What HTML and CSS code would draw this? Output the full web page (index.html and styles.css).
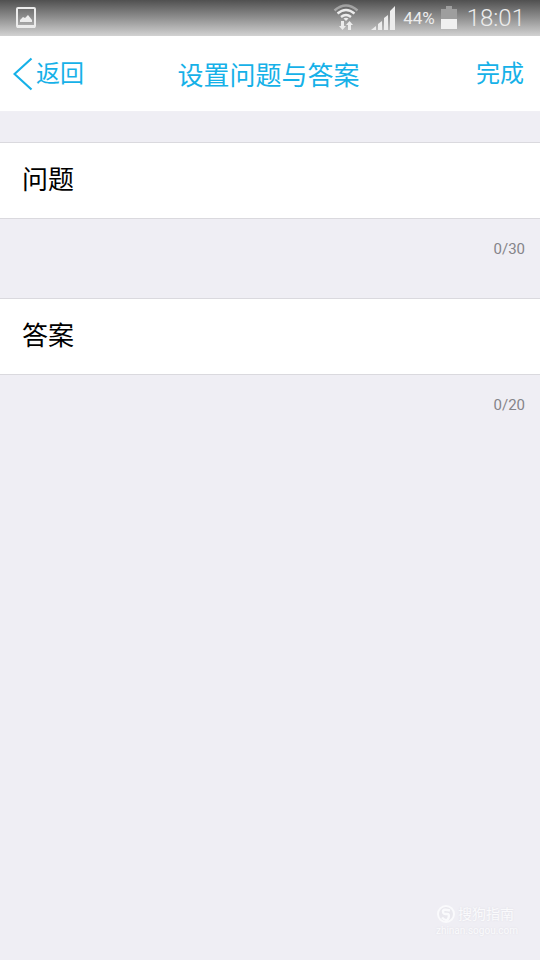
FILE: index.html
```html
<!DOCTYPE html>
<html lang="zh-CN">
<head>
<meta charset="utf-8">
<meta name="viewport" content="width=device-width, initial-scale=1">
<title>设置问题与答案</title>
<link rel="stylesheet" href="styles.css">
</head>
<body>
<div class="status-bar">
  <svg class="status-photo" width="20" height="22" viewBox="0 0 20 22" aria-hidden="true">
    <rect x="1" y="1" width="18" height="19" rx="1" fill="none" stroke="currentColor" stroke-width="2"/>
    <path d="M1 18h18v3H1z" fill="currentColor"/>
    <path d="M4 15v-2l3-3 2 1 3-3 4 5v2z" fill="currentColor"/>
  </svg>
  <div class="status-info">
    <svg width="26" height="28" viewBox="0 0 26 28" aria-hidden="true">
      <g fill="none" stroke="currentColor" stroke-width="2.4">
        <path d="M1.500 6.500Q13-3.500 24.500 6.500" opacity=".45"/>
        <path d="M4.500 9.500Q13 2.500 21.500 9.500"/>
        <path d="M8 13Q13 9 18 13"/>
      </g>
      <path d="M10.500 14.500Q13 13 15.500 14.500L13 17z" fill="currentColor"/>
      <path d="M8 17h3v5h2l-3.500 4L6 22h2zM15 26v-5h-2l3.500-4 3.500 4h-2v5z" fill="currentColor"/>
    </svg>
    <svg class="status-signal" width="24" height="24" viewBox="0 0 24 24" aria-hidden="true">
      <path d="M0 24l5-4v4zM7 18l4-3v9H7zM13 12l4-3v15h-4zM19 5l5-5v24h-5z" fill="currentColor"/>
    </svg>
    <span class="status-percent">44%</span>
    <svg class="status-battery" width="16" height="24" viewBox="0 0 16 24" aria-hidden="true">
      <path d="M5 0h6v3h5v11H0V3h5z" fill="#9e9e9e"/>
      <path d="M0 13h16v10H0z" fill="#f0f0f0"/>
    </svg>
    <span class="status-time">18:01</span>
  </div>
</div>
<header class="nav">
  <button class="nav-button nav-back" type="button">
    <svg width="20" height="34" viewBox="0 0 20 34" aria-hidden="true">
      <path d="M18.500 1.500L1.500 17l17 15.500" fill="none" stroke="currentColor" stroke-width="2.200"/>
    </svg>
    <span>返回</span>
  </button>
  <h1 class="nav-title">设置问题与答案</h1>
  <button class="nav-button nav-done" type="button">完成</button>
</header>
<main class="form">
  <div class="row">
    <label for="question">问题</label>
    <input id="question" type="text" maxlength="30">
  </div>
  <p class="count">0/30</p>
  <div class="row">
    <label for="answer">答案</label>
    <input id="answer" type="text" maxlength="20">
  </div>
  <p class="count">0/20</p>
</main>
<footer class="watermark">
  <div class="watermark-brand">
    <svg width="20" height="20" viewBox="0 0 20 20" aria-hidden="true">
      <circle cx="10" cy="10" r="8" fill="#e9e8ee" stroke="currentColor" stroke-width="2"/>
      <path d="M14 6.500Q7 4.500 7 7.500T10.500 10t2 4T6 13.500" fill="none" stroke="currentColor" stroke-width="2.400"/>
    </svg>
    <span>搜狗指南</span>
  </div>
  <div class="watermark-site">zhinan.sogou.com</div>
</footer>
</body>
</html>
```
FILE: styles.css
```css
* {
  box-sizing: border-box;
}

body {
  display: flex;
  flex-direction: column;
  min-height: 100vh;
  margin: 0;
  background: #efeef4;
  color: #000;
  font-family: Roboto, "Noto Sans CJK SC", sans-serif;
}

.status-bar {
  display: flex;
  align-items: center;
  justify-content: space-between;
  height: 36px;
  padding: 0 15px 0 16px;
  background: linear-gradient(#505050, #909090 50%, #d2d2d2);
  color: #ececec;
}

.status-info {
  display: flex;
  align-items: center;
}

.status-signal {
  margin: 0 8px 0 12px;
}

.status-percent {
  font-size: 17px;
}

.status-battery {
  margin: 0 10px 0 6px;
}

.status-time {
  font-size: 24px;
  font-weight: 300;
  line-height: 36px;
}

.nav {
  display: grid;
  grid-template-columns: 1fr auto 1fr;
  align-items: center;
  height: 76px;
  padding: 0 16px 0 13px;
  border-bottom: 1px solid #f0eff4;
  background: #fff;
  color: #16b1e8;
}

.nav-button {
  display: flex;
  align-items: center;
  gap: 3px;
  padding: 0;
  border: 0;
  background: none;
  color: inherit;
  font: inherit;
  font-size: 24px;
  line-height: 34px;
}

.nav-back {
  justify-self: start;
}

.nav-done {
  justify-self: end;
}

.nav-title {
  margin: 0;
  padding-top: 5px;
  font-size: 26px;
  font-weight: 400;
  line-height: 36px;
}

.form {
  flex: 1;
  padding-top: 30px;
}

.row {
  display: flex;
  align-items: center;
  gap: 20px;
  height: 77px;
  padding: 0 22px 2px;
  border: solid #dad9de;
  border-width: 1px 0;
  background: #fff;
  font-size: 26px;
  line-height: 36px;
}

.row input {
  flex: 1;
  min-width: 0;
  padding: 0;
  border: 0;
  outline: 0;
  background: none;
  font: inherit;
}

.count {
  height: 79px;
  margin: 0;
  padding: 20px 15px 0;
  color: #858489;
  font-size: 15px;
  line-height: 20px;
  text-align: right;
}

.watermark {
  align-self: flex-end;
  padding: 0 22px 22px 0;
  color: #fafafc;
  text-shadow: 0 0 2px #dddce3;
}

.watermark-brand {
  display: flex;
  align-items: center;
  gap: 2px;
  font-size: 14px;
  line-height: 20px;
}

.watermark-site {
  font-size: 10px;
  line-height: 14px;
}
```
